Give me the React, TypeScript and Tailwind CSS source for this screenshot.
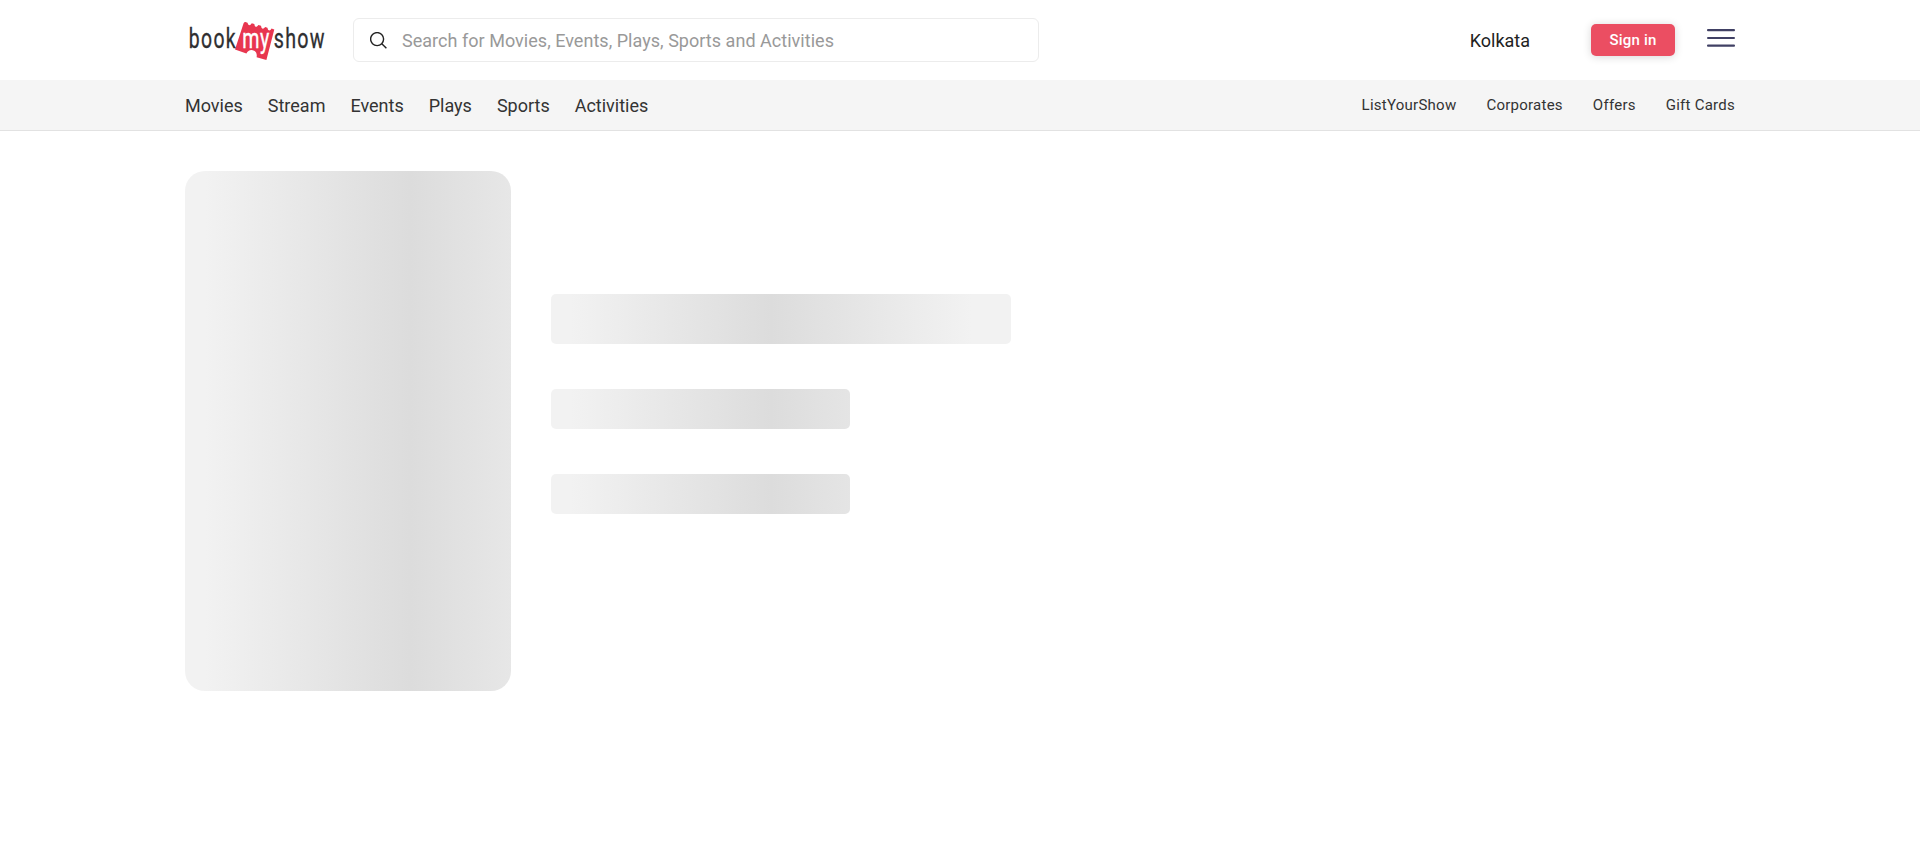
import React from "react";

const shimmer =
  "bg-[linear-gradient(to_right,#f2f2f2_20px,#dcdcdc_220px,#f2f2f2_420px)]";
const posterShimmer =
  "bg-[linear-gradient(to_right,#f2f2f2_20px,#dcdcdc_225px,#f2f2f2_430px)]";

const primaryLinks = ["Movies", "Stream", "Events", "Plays", "Sports", "Activities"];
const secondaryLinks = ["ListYourShow", "Corporates", "Offers", "Gift Cards"];

function Logo() {
  return (
    <svg width="144" height="50" viewBox="0 0 144 50" className="block shrink-0">
      <path
        d="M58.5 8.5 Q59 6.6 60.5 7 L62.5 7.8 Q63 10 64.3 10.3 Q65.6 10 66.8 8.2 L69.3 9 Q69.5 11.5 71 11.9 Q72.4 11.8 73.4 10 L76 10.8 Q76.2 13.4 77.8 13.7 Q79 13.6 80.2 12 L82.4 12.8 Q82.8 15.2 84.2 15.5 Q85.6 15.4 86.6 13.6 L89.3 14.6 L81.4 45 L71.6 42.2 Q72.6 36.6 67.8 35.2 Q63.4 34.4 61.4 38.6 L50 34.6 Z"
        fill="#e8364f"
      />
      <g fontFamily="Roboto, sans-serif" fontSize="28.5" fontWeight="400" strokeWidth="0.35">
        <text transform="translate(3.8 32.5) scale(0.68 1)" letterSpacing="2" fill="#2e2e30" stroke="#2e2e30">book</text>
        <text transform="translate(57.2 32.5) scale(0.69 1)" letterSpacing="1" fill="#fff" stroke="#fff">my</text>
        <text transform="translate(88.8 32.5) scale(0.69 1)" letterSpacing="1.8" fill="#2e2e30" stroke="#2e2e30">show</text>
      </g>
    </svg>
  );
}

export default function App() {
  return (
    <div className="min-h-screen bg-white font-['Roboto',sans-serif] text-[#333]">
      <header className="h-20 bg-white">
        <div className="mx-auto flex h-20 w-[1550px] items-center">
          <Logo />
          <div className="ml-6 flex h-11 w-[686px] items-center rounded-md border border-[#ececec] bg-white pl-4">
            <svg width="18" height="18" viewBox="0 0 18 18" fill="none" stroke="#222" strokeWidth="1.4" className="mt-0.5">
              <circle cx="7.1" cy="7.1" r="6.5" />
              <path d="M11.8 11.7 L16.4 16.2" />
            </svg>
            <span className="ml-[14px] pt-0.5 text-lg tracking-[0.03px] text-[#999]">
              Search for Movies, Events, Plays, Sports and Activities
            </span>
          </div>
          <div className="ml-auto flex items-center">
            <span className="pt-0.5 text-lg leading-6 text-[#222]">Kolkata</span>
            <button className="ml-[61px] h-8 w-[84px] rounded-[5px] bg-[#eb4e62] text-[15px] font-medium tracking-[0.2px] text-white shadow-[0_1px_8px_rgba(0,0,0,0.16)]">
              Sign in
            </button>
            <svg width="28" height="20" viewBox="0 0 28 20" className="mb-1 ml-8" fill="#404064">
              <rect y="1" width="28" height="2.2" rx="1" />
              <rect y="9" width="28" height="2" rx="1" />
              <rect y="16.5" width="28" height="2.2" rx="1" />
            </svg>
          </div>
        </div>
      </header>
      <nav className="h-[51px] border-b border-[#e2e2e2] bg-[#f5f5f5]">
        <div className="mx-auto flex h-[50px] w-[1550px] items-center justify-between">
          <div className="flex gap-[25px] pt-0.5 text-lg">
            {primaryLinks.map((label) => (
              <a key={label}>{label}</a>
            ))}
          </div>
          <div className="flex gap-[30px] text-[15px] tracking-[0.25px]">
            {secondaryLinks.map((label) => (
              <a key={label}>{label}</a>
            ))}
          </div>
        </div>
      </nav>
      <main className="mx-auto flex w-[1550px] gap-10 pt-10">
        <div className={`h-[520px] w-[326px] rounded-[20px] ${posterShimmer}`} />
        <div className="flex flex-col gap-[45px] pt-[123px]">
          <div className={`h-[50px] w-[460px] rounded-[5px] ${shimmer}`} />
          <div className={`h-10 w-[299px] rounded-[5px] ${shimmer}`} />
          <div className={`h-10 w-[299px] rounded-[5px] ${shimmer}`} />
        </div>
      </main>
    </div>
  );
}
